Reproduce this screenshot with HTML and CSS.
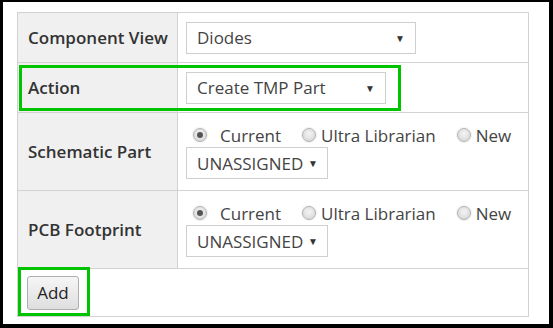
FILE: index.html
```html
<!DOCTYPE html>
<html lang="en">
<head>
    <meta charset="UTF-8">
    <title>Add Part</title>
    <link rel="stylesheet" href="styles.css">
</head>
<body>

<div class="frame">
    <div class="panel">
        <table class="form">
            <tr>
                <th>Component View</th>
                <td>
                    <div class="select view"><span>Diodes</span><span class="caret">▼</span></div>
                </td>
            </tr>
            <tr>
                <th>Action</th>
                <td>
                    <div class="select action"><span>Create TMP Part</span><span class="caret">▼</span></div>
                </td>
            </tr>
            <tr class="tall">
                <th>Schematic Part</th>
                <td>
                    <div class="choices">
                        <span class="radio checked"></span><span class="opt">Current</span>
                        <span class="radio"></span><span class="opt">Ultra Librarian</span>
                        <span class="radio"></span><span class="opt">New</span>
                    </div>
                    <div class="select small"><span>UNASSIGNED</span><span class="caret">▼</span></div>
                </td>
            </tr>
            <tr class="tall">
                <th>PCB Footprint</th>
                <td>
                    <div class="choices">
                        <span class="radio checked"></span><span class="opt">Current</span>
                        <span class="radio"></span><span class="opt">Ultra Librarian</span>
                        <span class="radio"></span><span class="opt">New</span>
                    </div>
                    <div class="select small"><span>UNASSIGNED</span><span class="caret">▼</span></div>
                </td>
            </tr>
            <tr class="last">
                <td colspan="2"><button class="btn">Add</button></td>
            </tr>
        </table>

        <!-- highlight boxes -->
        <div class="mark mark-action"></div>
        <div class="mark mark-add"></div>
    </div>
</div>

</body>
</html>
```

FILE: styles.css
```css
body {
    margin: 0;
    background: #000;
    font-family: 'Open Sans', 'Liberation Sans', sans-serif;
}

.frame {
    background: #fff;
    margin: 2px 4px 0 3px;
    height: 322px;
    padding: 10px 0 0 14px;
    box-sizing: border-box;
}

.panel {
    position: relative;
    width: 512px;
}

.form {
    border-collapse: collapse;
    width: 512px;
}

.form th,
.form td {
    border: 1px solid #d2d2d2;
    height: 49px;
    padding: 0;
    font-size: 17px;
    color: #333;
}

.form th {
    width: 149px;
    background: #f0f0f0;
    text-align: left;
    padding-left: 10px;
    font-weight: 600;
}

.form td {
    padding-left: 8px;
}

.form tr.tall th,
.form tr.tall td {
    height: 77px;
}

.form tr.last td {
    height: 47px;
    padding-left: 9px;
}

.select {
    display: flex;
    justify-content: space-between;
    align-items: center;
    box-sizing: border-box;
    height: 32px;
    border: 1px solid #cfcfcf;
    background: #fff;
    padding: 0 10px;
    color: #444;
}

.select.view { width: 230px; }
.select.action { width: 200px; }
.select.small { width: 142px; padding-right: 9px; }

.caret {
    font-size: 10px;
    color: #333;
}

.choices {
    display: flex;
    align-items: center;
    height: 22px;
    margin-bottom: 1px;
    color: #444;
    white-space: nowrap;
}

.radio {
    flex: none;
    width: 14px;
    height: 14px;
    border-radius: 50%;
    border: 1px solid #b4b4b4;
    background: radial-gradient(circle at 50% 40%, #f4f4f4, #e2e2e2 55%, #cdcdcd);
    box-shadow: 0 0 1px 1px rgba(0, 0, 0, 0.06);
    margin: 0 5px 0 21px;
    box-sizing: border-box;
    position: relative;
}

.radio:first-child {
    margin-left: 7px;
    margin-right: 13px;
}

.radio.checked::after {
    content: "";
    position: absolute;
    left: 3px;
    top: 3px;
    width: 6px;
    height: 6px;
    border-radius: 50%;
    background: #555;
}

.btn {
    font-family: inherit;
    font-size: 17px;
    color: #222;
    width: 52px;
    height: 34px;
    padding: 0;
    border: 1px solid #adadad;
    border-radius: 3px;
    background: linear-gradient(#f6f6f6, #dedede);
}

.mark {
    position: absolute;
    border: 3px solid #00c400;
}

.mark-action {
    left: 2px;
    top: 53px;
    width: 376px;
    height: 40px;
}

.mark-add {
    left: 1px;
    top: 255px;
    width: 66px;
    height: 43px;
}
```
